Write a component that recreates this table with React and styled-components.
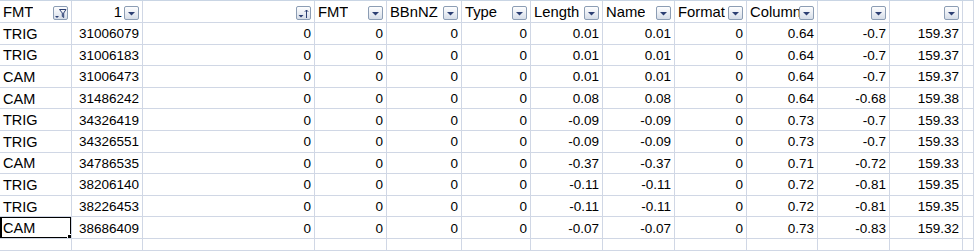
import React from 'react'
import styled, { createGlobalStyle } from 'styled-components';

const GlobalStyle = createGlobalStyle`
  body {
    margin: 0;
    background: #fff;
  }
`;

const Sheet = styled.div`
  display: grid;
  grid-template-columns: 72px 71px 172px 72px 75px 69px 72px 72px 72px 71px 72px 73px 1fr;
  grid-template-rows: 22px repeat(10, 21.6px) 1fr;
  width: 974px;
  height: 251px;
  overflow: hidden;
  font-family: "Liberation Sans", Arial, sans-serif;
  font-size: 13.5px;
  color: #000;
  border-top: 1px solid ${p => p.$top};
  box-sizing: border-box;
`;

const Cell = styled.div`
  position: relative;
  box-sizing: border-box;
  border-right: 1px solid #d0d7e5;
  border-bottom: 1px solid #d0d7e5;
  display: flex;
  align-items: center;
  justify-content: ${p => (p.$num ? 'flex-end' : 'flex-start')};
  font-size: ${p => (p.$num ? '13.5px' : '14.5px')};
  padding: 1px 3px 0 3px;
  white-space: nowrap;
  overflow: hidden;
`;

const HeadCell = styled(Cell)`
  font-size: 14.8px;
  padding-right: ${p => (p.$num ? '20px' : '3px')};
  border-top: ${p => (p.$active ? '1px solid #f4a55a' : 'none')};
  margin-top: ${p => (p.$active ? '-1px' : '0')};
`;

const HeadLabel = styled.span`
  overflow: hidden;
  max-width: ${p => p.$max}px;
`;

const FilterButton = styled.span`
  position: absolute;
  right: 3px;
  top: 5px;
  width: 15px;
  height: 14px;
  box-sizing: border-box;
  border: 1px solid #8c9db4;
  border-radius: 2px;
  background: linear-gradient(#fdfdfe, #e9edf3 55%, #d6dde8);
  display: flex;
  align-items: center;
  justify-content: center;
`;

const Selected = styled.span`
  position: absolute;
  left: 0;
  top: -1px;
  right: -1px;
  bottom: -1px;
  border: 2px solid #000;
  pointer-events: none;
`;

const FillHandle = styled.span`
  position: absolute;
  right: -4px;
  bottom: -4px;
  width: 5px;
  height: 5px;
  background: #000;
  border: 1px solid #fff;
`;

const ArrowIcon = () => (
  <svg width="9" height="6" viewBox="0 0 9 6">
    <path d="M1 2h7L4.5 5.5z" fill="#2c3f73" />
  </svg>
);

const FunnelIcon = () => (
  <svg width="13" height="11" viewBox="0 0 13 11">
    <path d="M1 8h4L3 10z" fill="#2c3f73" />
    <path d="M5.5 1.5h6.5L9.7 5v4.5l-1.4-1V5z" fill="none" stroke="#2c3f73" strokeWidth="1" />
  </svg>
);

const SortIcon = () => (
  <svg width="13" height="11" viewBox="0 0 13 11">
    <path d="M1.5 7h5L4 9.5z" fill="#2c3f73" />
    <path d="M9.5 2v8M7.8 3.8l1.7-1.8 1.7 1.8" fill="none" stroke="#2c3f73" strokeWidth="1" />
  </svg>
);

const headers = [
  { label: 'FMT', icon: 'funnel', active: true },
  { label: '1', num: true },
  { label: '', icon: 'sort' },
  { label: 'FMT' },
  { label: 'BBnNZ' },
  { label: 'Type' },
  { label: 'Length' },
  { label: 'Name' },
  { label: 'Format' },
  { label: 'Column', max: 52 },
  { label: '' },
  { label: '' },
];

const rows = [
  ['TRIG', '31006079', '0', '0', '0', '0', '0.01', '0.01', '0', '0.64', '-0.7', '159.37'],
  ['TRIG', '31006183', '0', '0', '0', '0', '0.01', '0.01', '0', '0.64', '-0.7', '159.37'],
  ['CAM', '31006473', '0', '0', '0', '0', '0.01', '0.01', '0', '0.64', '-0.7', '159.37'],
  ['CAM', '31486242', '0', '0', '0', '0', '0.08', '0.08', '0', '0.64', '-0.68', '159.38'],
  ['TRIG', '34326419', '0', '0', '0', '0', '-0.09', '-0.09', '0', '0.73', '-0.7', '159.33'],
  ['TRIG', '34326551', '0', '0', '0', '0', '-0.09', '-0.09', '0', '0.73', '-0.7', '159.33'],
  ['CAM', '34786535', '0', '0', '0', '0', '-0.37', '-0.37', '0', '0.71', '-0.72', '159.33'],
  ['TRIG', '38206140', '0', '0', '0', '0', '-0.11', '-0.11', '0', '0.72', '-0.81', '159.35'],
  ['TRIG', '38226453', '0', '0', '0', '0', '-0.11', '-0.11', '0', '0.72', '-0.81', '159.35'],
  ['CAM', '38686409', '0', '0', '0', '0', '-0.07', '-0.07', '0', '0.73', '-0.83', '159.32'],
];

const App = () => {
  return <>
    <GlobalStyle />
    <Sheet $top="#c9d5e4">
      {headers.map((h, i) => (
        <HeadCell key={'h' + i} $num={h.num} $active={h.active}>
          <HeadLabel $max={h.max || 200}>{h.label}</HeadLabel>
          <FilterButton>
            {h.icon === 'funnel' ? <FunnelIcon /> : h.icon === 'sort' ? <SortIcon /> : <ArrowIcon />}
          </FilterButton>
        </HeadCell>
      ))}
      <Cell />
      {rows.map((r, ri) => (
        <React.Fragment key={ri}>
          {r.map((v, ci) => (
            <Cell key={ci} $num={ci > 0}>
              {v}
              {ri === rows.length - 1 && ci === 0 && <Selected><FillHandle /></Selected>}
            </Cell>
          ))}
          <Cell />
        </React.Fragment>
      ))}
      {Array.from({ length: 13 }).map((_, i) => <Cell key={'e' + i} />)}
    </Sheet>
  </>
}

export default App;
